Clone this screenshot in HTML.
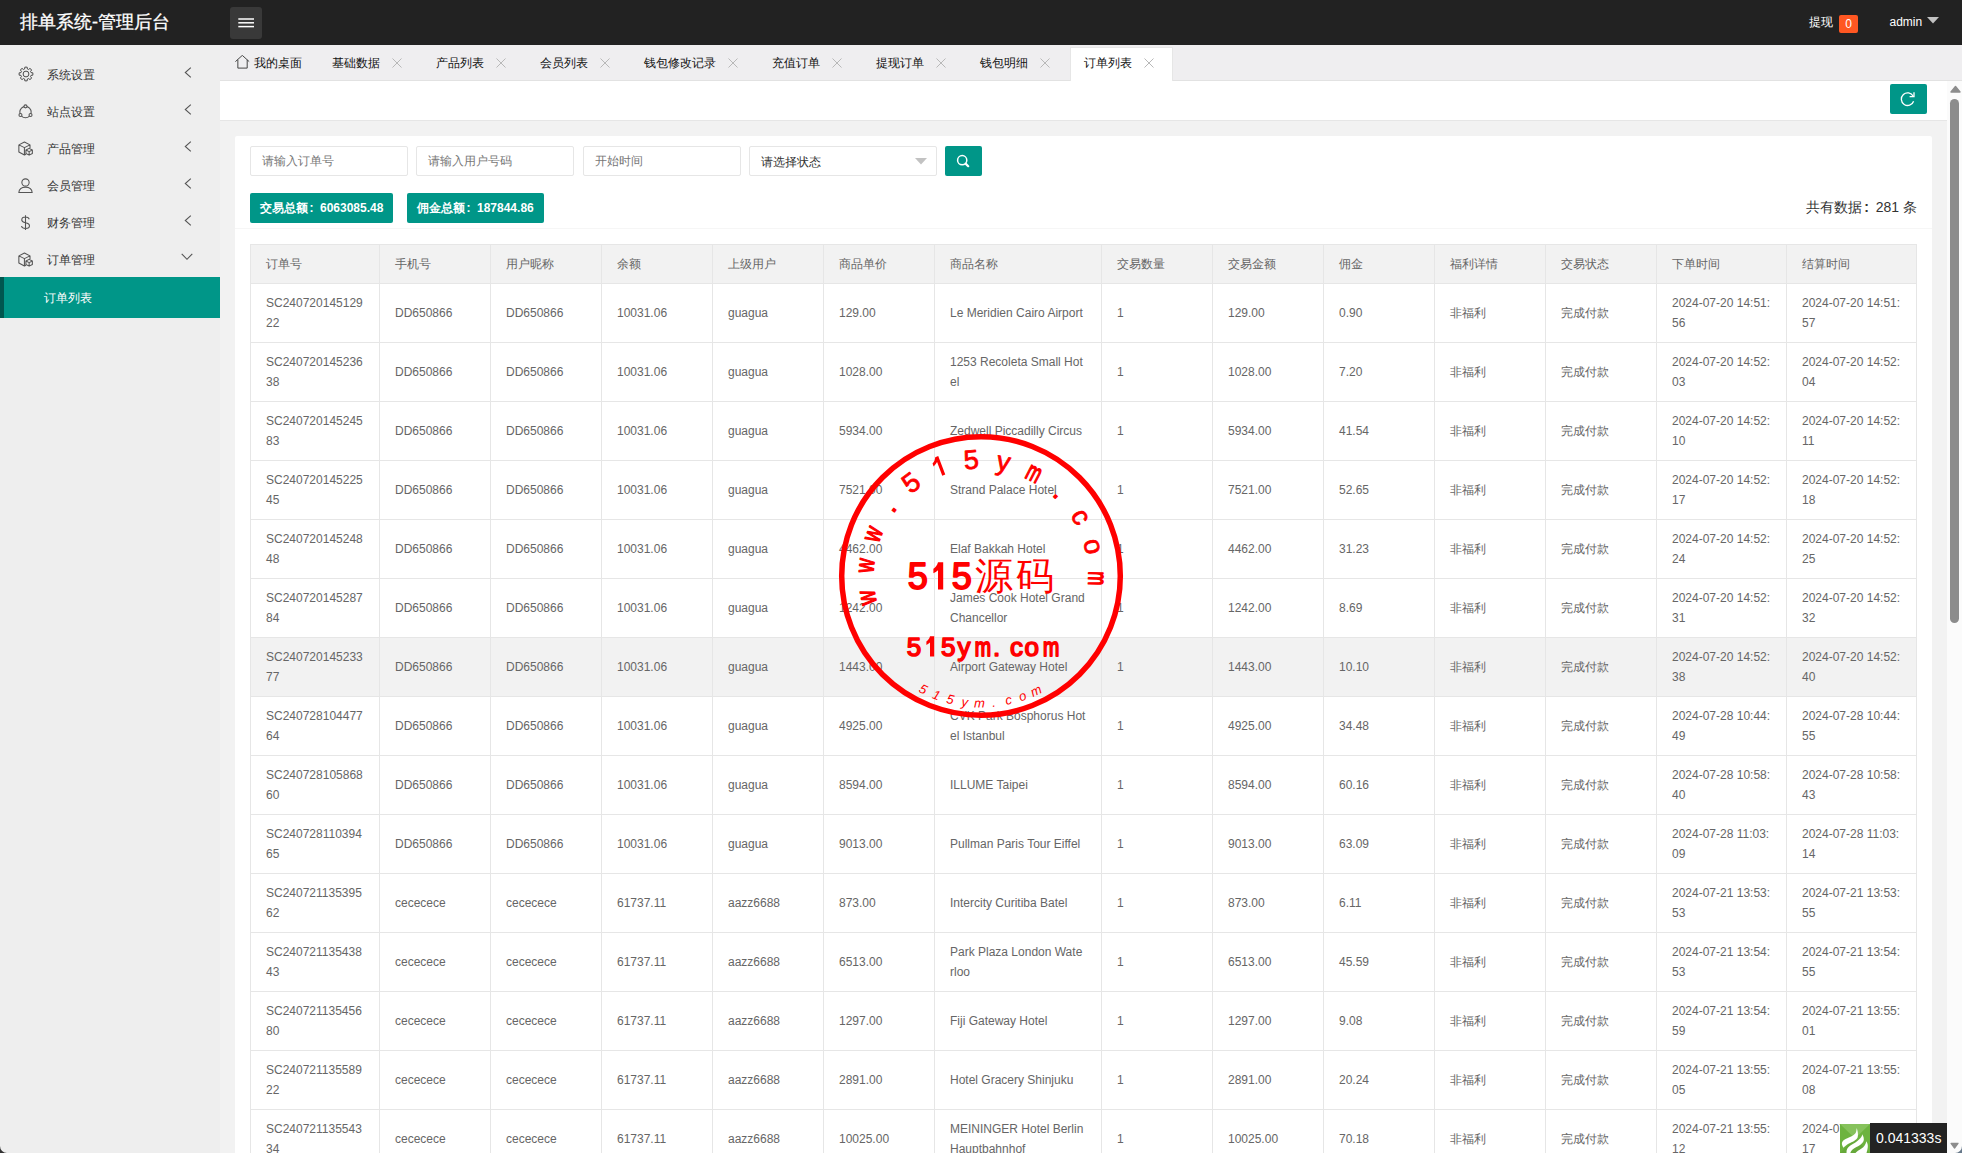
<!DOCTYPE html>
<html><head><meta charset="utf-8"><title>排单系统-管理后台</title>
<style>
*{margin:0;padding:0;box-sizing:border-box}
html,body{width:1962px;height:1153px;overflow:hidden;background:#fff;font-family:"Liberation Sans",sans-serif;font-size:12px;color:#333}
.abs{position:absolute}
#hdr{left:0;top:0;width:1962px;height:45px;background:#222}
#logo{left:20px;top:8.5px;font-size:18px;line-height:26px;color:#fff;white-space:nowrap;-webkit-text-stroke:0.3px #fff}
#burger{left:230px;top:7px;width:32px;height:32px;background:#393939;border-radius:3px}
#side{left:0;top:45px;width:220px;height:1108px;background:#eee}
.nav{position:absolute;left:0;width:220px;height:37px}
.nav .t{position:absolute;left:47px;top:10px;line-height:20px;font-size:12px;color:#333;white-space:nowrap}
.nav svg.ic{position:absolute;left:18.4px;top:12px}
.nav svg.ar{position:absolute;left:183.5px}
#act{left:0;top:277px;width:220px;height:41px;background:#009688}
#act .strip{position:absolute;left:0;top:0;width:4px;height:41px;background:#00574f}
#act .t{position:absolute;left:44px;top:11px;line-height:20px;color:#fff;font-size:12px}
#tabs{left:220px;top:45px;width:1742px;height:36px;background:#efeef0;border-bottom:1px solid #e2e2e2}
.tab{position:absolute;top:12px;line-height:20px;font-size:12px;color:#111;white-space:nowrap}
.tx{position:absolute;top:58px}
#acttab{left:1070px;top:47px;width:103px;height:34px;background:#fff;border:1px solid #e6e6e6;border-bottom:none}
#frame{left:220px;top:81px;width:1742px;height:1072px;background:#f2f2f2;overflow:hidden}
#topbar{left:0;top:0;width:1727px;height:40px;background:#fff;border-bottom:1px solid #e6e6e6}
#refresh{left:1670px;top:3px;width:37px;height:30px;background:#009688;border-radius:2px}
#sb{left:1727px;top:0;width:15px;height:1072px;background:#fbfbfb}
#card{left:15px;top:55px;width:1697px;height:1100px;background:#fff;border-radius:2px}
.inp{position:absolute;top:10px;height:30px;border:1px solid #e6e6e6;border-radius:2px;background:#fff}
.inp span{position:absolute;left:10.5px;top:4px;line-height:20px;color:#777;font-size:12px;white-space:nowrap}
.cl{display:inline-block;width:12px;text-align:left;padding-left:1.5px}
.badge{position:absolute;top:57px;height:30px;background:#009688;border-radius:2px;color:#fff;font-weight:bold;font-size:12px;line-height:30px;padding-left:10px;white-space:nowrap}
#hline{left:0;top:92px;width:1697px;height:1px;background:#f6f6f6}
#total{position:absolute;right:15px;top:61px;font-size:14px;line-height:20px;color:#333;white-space:nowrap}
table.lt{position:absolute;left:15px;top:108px;border-collapse:collapse;table-layout:fixed;width:1666px;font-size:12px;color:#666}
table.lt td,table.lt th{border:1px solid #e6e6e6;padding:9px 15px;line-height:20px;text-align:left;font-weight:normal;word-break:break-all;vertical-align:middle}
table.lt th{background:#f2f2f2;color:#666}
table.lt tr.hov td{background:#f2f2f2}
#stamp{left:831px;top:426px;width:300px;height:300px}
#trace{left:1840px;top:1124px;width:30px;height:29px;background:#6db33f}
#tracet{left:1870px;top:1123px;width:77px;height:30px;background:#232323;color:#fff;font-size:14px;line-height:30px;padding-left:6px;white-space:nowrap}
</style></head><body>
<div id="hdr" class="abs">
  <div id="logo" class="abs">排单系统-管理后台</div>
  <div id="burger" class="abs">
    <svg width="32" height="32" viewBox="0 0 32 32"><g stroke="#fff" stroke-width="1.5"><line x1="8.3" y1="12" x2="24" y2="12"/><line x1="8.3" y1="15.8" x2="24" y2="15.8"/><line x1="8.3" y1="19.6" x2="24" y2="19.6"/></g></svg>
  </div>
  <div class="abs" style="left:1809px;top:12px;line-height:20px;color:#fff;font-size:12px">提现</div>
  <div class="abs" style="left:1839px;top:15px;width:19px;height:18px;background:#ff5722;border-radius:2px;color:#fff;font-size:12px;line-height:18px;text-align:center">0</div>
  <div class="abs" style="left:1889.5px;top:11.5px;line-height:20px;color:#fff;font-size:12px">admin</div>
  <svg class="abs" style="left:1927px;top:17px" width="12" height="7" viewBox="0 0 12 7"><path d="M0 0H12L6 6.5z" fill="#c2c2c2"/></svg>
</div>
<div class="abs" style="left:0;top:45px;width:220px;height:1108px;background:#eee"></div>
<div class="nav" style="top:55px"><svg class="ic" style="left:18px;top:11px" width="16" height="16" viewBox="0 0 16 16"><path d="M6.80,1.20 A6.90,6.90 0 0 1 9.20,1.20 L9.35,2.98 A5.20,5.20 0 0 1 10.60,3.50 L11.96,2.35 A6.90,6.90 0 0 1 13.65,4.04 L12.50,5.40 A5.20,5.20 0 0 1 13.02,6.65 L14.80,6.80 A6.90,6.90 0 0 1 14.80,9.20 L13.02,9.35 A5.20,5.20 0 0 1 12.50,10.60 L13.65,11.96 A6.90,6.90 0 0 1 11.96,13.65 L10.60,12.50 A5.20,5.20 0 0 1 9.35,13.02 L9.20,14.80 A6.90,6.90 0 0 1 6.80,14.80 L6.65,13.02 A5.20,5.20 0 0 1 5.40,12.50 L4.04,13.65 A6.90,6.90 0 0 1 2.35,11.96 L3.50,10.60 A5.20,5.20 0 0 1 2.98,9.35 L1.20,9.20 A6.90,6.90 0 0 1 1.20,6.80 L2.98,6.65 A5.20,5.20 0 0 1 3.50,5.40 L2.35,4.04 A6.90,6.90 0 0 1 4.04,2.35 L5.40,3.50 A5.20,5.20 0 0 1 6.65,2.98 Z" fill="none" stroke="#444" stroke-width="0.95" stroke-linejoin="round"/><circle cx="8" cy="8" r="2.9" fill="none" stroke="#444" stroke-width="0.95"/></svg><span class="t">系统设置</span><svg class="ar" style="top:12px" width="8" height="11" viewBox="0 0 8 11"><path d="M6.8,0.6 L1.3,5.5 L6.8,10.4" fill="none" stroke="#555" stroke-width="1.1"/></svg></div>
<div class="nav" style="top:92px"><svg class="ic" width="15" height="15" viewBox="0 0 14 14"><circle cx="7" cy="7.5" r="5.3" fill="none" stroke="#555" stroke-width="1"/><circle cx="7" cy="2.2" r="1.4" fill="#eee" stroke="#555" stroke-width="1"/><circle cx="2.3" cy="10.3" r="1.4" fill="#eee" stroke="#555" stroke-width="1"/><circle cx="11.7" cy="10.3" r="1.4" fill="#eee" stroke="#555" stroke-width="1"/></svg><span class="t">站点设置</span><svg class="ar" style="top:12px" width="8" height="11" viewBox="0 0 8 11"><path d="M6.8,0.6 L1.3,5.5 L6.8,10.4" fill="none" stroke="#555" stroke-width="1.1"/></svg></div>
<div class="nav" style="top:129px"><svg class="ic" width="15" height="15" viewBox="0 0 14 14"><g fill="none" stroke="#555" stroke-width="1" stroke-linejoin="round"><path d="M0.8,3.6 L6,1 L11.2,3.6 L11.2,6.6 M0.8,3.6 L0.8,10.2 L6,13 L7.4,12.3 M0.8,3.6 L6,6.2 L11.2,3.6 M6,6.2 V13"/><path d="M7.4,8.4 L10.4,6.9 L13.4,8.4 V11.7 L10.4,13.2 L7.4,11.7Z M7.4,8.4 L10.4,9.9 L13.4,8.4 M10.4,9.9 V13.2" fill="#eee"/></g></svg><span class="t">产品管理</span><svg class="ar" style="top:12px" width="8" height="11" viewBox="0 0 8 11"><path d="M6.8,0.6 L1.3,5.5 L6.8,10.4" fill="none" stroke="#555" stroke-width="1.1"/></svg></div>
<div class="nav" style="top:166px"><svg class="ic" width="15" height="15" viewBox="0 0 14 14"><g fill="none" stroke="#555" stroke-width="1"><circle cx="7" cy="4.2" r="3.4"/><path d="M0.8,13.5 C1,9.8 3.6,8.6 7,8.6 C10.4,8.6 13,9.8 13.2,13.5 Z"/></g></svg><span class="t">会员管理</span><svg class="ar" style="top:12px" width="8" height="11" viewBox="0 0 8 11"><path d="M6.8,0.6 L1.3,5.5 L6.8,10.4" fill="none" stroke="#555" stroke-width="1.1"/></svg></div>
<div class="nav" style="top:203px"><svg class="ic" width="15" height="15" viewBox="0 0 14 14"><g fill="none" stroke="#555" stroke-width="1"><path d="M10.6,3.9 C10,2.5 8.6,1.9 7,1.9 C4.9,1.9 3.5,3 3.5,4.6 C3.5,6.3 5.3,6.8 7,7.2 C8.8,7.6 10.7,8.1 10.7,10 C10.7,11.7 9.2,12.6 7,12.6 C5.2,12.6 3.7,11.9 3.2,10.4 M7,0.3 V14"/></g></svg><span class="t">财务管理</span><svg class="ar" style="top:12px" width="8" height="11" viewBox="0 0 8 11"><path d="M6.8,0.6 L1.3,5.5 L6.8,10.4" fill="none" stroke="#555" stroke-width="1.1"/></svg></div>
<div class="nav" style="top:240px"><svg class="ic" width="15" height="15" viewBox="0 0 14 14"><g fill="none" stroke="#555" stroke-width="1" stroke-linejoin="round"><path d="M0.8,3.6 L6,1 L11.2,3.6 L11.2,6.6 M0.8,3.6 L0.8,10.2 L6,13 L7.4,12.3 M0.8,3.6 L6,6.2 L11.2,3.6 M6,6.2 V13"/><path d="M7.4,8.4 L10.4,6.9 L13.4,8.4 V11.7 L10.4,13.2 L7.4,11.7Z M7.4,8.4 L10.4,9.9 L13.4,8.4 M10.4,9.9 V13.2" fill="#eee"/></g></svg><span class="t">订单管理</span><svg class="ar" style="top:13px;left:181px" width="12" height="8" viewBox="0 0 12 8"><path d="M0.7,0.8 L6,6.3 L11.3,0.8" fill="none" stroke="#555" stroke-width="1.1"/></svg></div>
<div id="act" class="abs"><div class="strip"></div><span class="t">订单列表</span></div>
<div id="tabs" class="abs"></div>
<div id="acttab" class="abs"></div>
<svg class="abs" style="left:234.5px;top:54.5px" width="15" height="14" viewBox="0 0 15 14"><path d="M0.4,6.6 L7.3,0.4 L14.2,6.6 M2.85,4.8 V13.1 H12.2 V4.8" fill="none" stroke="#333" stroke-width="0.9"/></svg>
<div class="abs tab" style="left:254px;top:53px">我的桌面</div>
<div class="abs tab" style="left:332px;top:53px">基础数据</div><svg class="abs tx" style="left:392px" width="10" height="10" viewBox="0 0 10 10"><path d="M0.5,0.5 L9.5,9.5 M9.5,0.5 L0.5,9.5" stroke="#b4b4b4" stroke-width="0.95"/></svg>
<div class="abs tab" style="left:436px;top:53px">产品列表</div><svg class="abs tx" style="left:496px" width="10" height="10" viewBox="0 0 10 10"><path d="M0.5,0.5 L9.5,9.5 M9.5,0.5 L0.5,9.5" stroke="#b4b4b4" stroke-width="0.95"/></svg>
<div class="abs tab" style="left:540px;top:53px">会员列表</div><svg class="abs tx" style="left:600px" width="10" height="10" viewBox="0 0 10 10"><path d="M0.5,0.5 L9.5,9.5 M9.5,0.5 L0.5,9.5" stroke="#b4b4b4" stroke-width="0.95"/></svg>
<div class="abs tab" style="left:644px;top:53px">钱包修改记录</div><svg class="abs tx" style="left:728px" width="10" height="10" viewBox="0 0 10 10"><path d="M0.5,0.5 L9.5,9.5 M9.5,0.5 L0.5,9.5" stroke="#b4b4b4" stroke-width="0.95"/></svg>
<div class="abs tab" style="left:772px;top:53px">充值订单</div><svg class="abs tx" style="left:832px" width="10" height="10" viewBox="0 0 10 10"><path d="M0.5,0.5 L9.5,9.5 M9.5,0.5 L0.5,9.5" stroke="#b4b4b4" stroke-width="0.95"/></svg>
<div class="abs tab" style="left:876px;top:53px">提现订单</div><svg class="abs tx" style="left:936px" width="10" height="10" viewBox="0 0 10 10"><path d="M0.5,0.5 L9.5,9.5 M9.5,0.5 L0.5,9.5" stroke="#b4b4b4" stroke-width="0.95"/></svg>
<div class="abs tab" style="left:980px;top:53px">钱包明细</div><svg class="abs tx" style="left:1040px" width="10" height="10" viewBox="0 0 10 10"><path d="M0.5,0.5 L9.5,9.5 M9.5,0.5 L0.5,9.5" stroke="#b4b4b4" stroke-width="0.95"/></svg>
<div class="abs tab" style="left:1084px;top:53px">订单列表</div><svg class="abs tx" style="left:1144px" width="10" height="10" viewBox="0 0 10 10"><path d="M0.5,0.5 L9.5,9.5 M9.5,0.5 L0.5,9.5" stroke="#b4b4b4" stroke-width="0.95"/></svg>
<div id="frame" class="abs">
  <div id="topbar" class="abs">
    <div id="refresh" class="abs"><svg width="37" height="30" viewBox="0 0 37 30"><path d="M23.2,12.2 A6.3,6.3 0 1 0 23.6,17.2" fill="none" stroke="#fff" stroke-width="1.3"/><path d="M19.6,12.6 H24 V8.2" fill="none" stroke="#fff" stroke-width="1.3"/></svg></div>
  </div>
  <div id="sb" class="abs">
    <svg class="abs" style="left:2.5px;top:4px" width="11" height="8" viewBox="0 0 11 8"><path d="M1,7 L5.5,1.5 L10,7z" fill="#8c8c8c" stroke="#8c8c8c" stroke-linejoin="round" stroke-width="1.4"/></svg>
    <div class="abs" style="left:3px;top:18px;width:9px;height:524px;background:#8c8c8c;border-radius:5px"></div>
    <svg class="abs" style="left:2.5px;top:1061px" width="10" height="8" viewBox="0 0 11 8"><path d="M1.2,1 L5,6.3 L8.8,1z" fill="#8c8c8c" stroke="#8c8c8c" stroke-linejoin="round" stroke-width="1.4"/></svg>
  </div>
  <div id="card" class="abs">
    <div class="inp" style="left:15px;width:158px"><span>请输入订单号</span></div>
    <div class="inp" style="left:181px;width:158px"><span>请输入用户号码</span></div>
    <div class="inp" style="left:348px;width:158px"><span>开始时间</span></div>
    <div class="inp" style="left:514px;width:188px"><span style="color:#333;top:5px">请选择状态</span>
      <svg class="abs" style="left:165px;top:11px" width="12" height="7" viewBox="0 0 12 7"><path d="M0,0H12L6,6.5z" fill="#c2c2c2"/></svg></div>
    <div class="abs" style="left:710px;top:10px;width:37px;height:30px;background:#009688;border-radius:2px">
      <svg width="37" height="30" viewBox="0 0 37 30"><circle cx="17.2" cy="14.2" r="4.6" fill="none" stroke="#fff" stroke-width="1.5"/><path d="M20.6,17.6 L23.2,20.2" stroke="#fff" stroke-width="2.2" stroke-linecap="round"/></svg>
    </div>
    <div class="badge" style="left:15px;width:143px">交易总额<span class="cl">:</span>6063085.48</div>
    <div class="badge" style="left:172px;width:137px">佣金总额<span class="cl">:</span>187844.86</div>
    <div id="total">共有数据<span class="cl" style="width:14px;padding-left:2.5px;font-weight:bold">:</span>281 条</div>
    <div id="hline" class="abs"></div>
    <table class="lt">
      <colgroup><col style="width:129px"><col style="width:111px"><col style="width:111px"><col style="width:111px"><col style="width:111px"><col style="width:111px"><col style="width:167px"><col style="width:111px"><col style="width:111px"><col style="width:111px"><col style="width:111px"><col style="width:111px"><col style="width:130px"><col style="width:130px"></colgroup>
      <thead><tr><th>订单号</th><th>手机号</th><th>用户昵称</th><th>余额</th><th>上级用户</th><th>商品单价</th><th>商品名称</th><th>交易数量</th><th>交易金额</th><th>佣金</th><th>福利详情</th><th>交易状态</th><th>下单时间</th><th>结算时间</th></tr></thead>
      <tbody>
<tr><td>SC24072014512922</td><td>DD650866</td><td>DD650866</td><td>10031.06</td><td>guagua</td><td>129.00</td><td>Le Meridien Cairo Airport</td><td>1</td><td>129.00</td><td>0.90</td><td>非福利</td><td>完成付款</td><td>2024-07-20 14:51:56</td><td>2024-07-20 14:51:57</td></tr>
<tr><td>SC24072014523638</td><td>DD650866</td><td>DD650866</td><td>10031.06</td><td>guagua</td><td>1028.00</td><td>1253 Recoleta Small Hotel</td><td>1</td><td>1028.00</td><td>7.20</td><td>非福利</td><td>完成付款</td><td>2024-07-20 14:52:03</td><td>2024-07-20 14:52:04</td></tr>
<tr><td>SC24072014524583</td><td>DD650866</td><td>DD650866</td><td>10031.06</td><td>guagua</td><td>5934.00</td><td>Zedwell Piccadilly Circus</td><td>1</td><td>5934.00</td><td>41.54</td><td>非福利</td><td>完成付款</td><td>2024-07-20 14:52:10</td><td>2024-07-20 14:52:11</td></tr>
<tr><td>SC24072014522545</td><td>DD650866</td><td>DD650866</td><td>10031.06</td><td>guagua</td><td>7521.00</td><td>Strand Palace Hotel</td><td>1</td><td>7521.00</td><td>52.65</td><td>非福利</td><td>完成付款</td><td>2024-07-20 14:52:17</td><td>2024-07-20 14:52:18</td></tr>
<tr><td>SC24072014524848</td><td>DD650866</td><td>DD650866</td><td>10031.06</td><td>guagua</td><td>4462.00</td><td>Elaf Bakkah Hotel</td><td>1</td><td>4462.00</td><td>31.23</td><td>非福利</td><td>完成付款</td><td>2024-07-20 14:52:24</td><td>2024-07-20 14:52:25</td></tr>
<tr><td>SC24072014528784</td><td>DD650866</td><td>DD650866</td><td>10031.06</td><td>guagua</td><td>1242.00</td><td>James Cook Hotel Grand Chancellor</td><td>1</td><td>1242.00</td><td>8.69</td><td>非福利</td><td>完成付款</td><td>2024-07-20 14:52:31</td><td>2024-07-20 14:52:32</td></tr>
<tr class="hov"><td>SC24072014523377</td><td>DD650866</td><td>DD650866</td><td>10031.06</td><td>guagua</td><td>1443.00</td><td>Airport Gateway Hotel</td><td>1</td><td>1443.00</td><td>10.10</td><td>非福利</td><td>完成付款</td><td>2024-07-20 14:52:38</td><td>2024-07-20 14:52:40</td></tr>
<tr><td>SC24072810447764</td><td>DD650866</td><td>DD650866</td><td>10031.06</td><td>guagua</td><td>4925.00</td><td>CVK Park Bosphorus Hotel Istanbul</td><td>1</td><td>4925.00</td><td>34.48</td><td>非福利</td><td>完成付款</td><td>2024-07-28 10:44:49</td><td>2024-07-28 10:44:55</td></tr>
<tr><td>SC24072810586860</td><td>DD650866</td><td>DD650866</td><td>10031.06</td><td>guagua</td><td>8594.00</td><td>ILLUME Taipei</td><td>1</td><td>8594.00</td><td>60.16</td><td>非福利</td><td>完成付款</td><td>2024-07-28 10:58:40</td><td>2024-07-28 10:58:43</td></tr>
<tr><td>SC24072811039465</td><td>DD650866</td><td>DD650866</td><td>10031.06</td><td>guagua</td><td>9013.00</td><td>Pullman Paris Tour Eiffel</td><td>1</td><td>9013.00</td><td>63.09</td><td>非福利</td><td>完成付款</td><td>2024-07-28 11:03:09</td><td>2024-07-28 11:03:14</td></tr>
<tr><td>SC24072113539562</td><td>cececece</td><td>cececece</td><td>61737.11</td><td>aazz6688</td><td>873.00</td><td>Intercity Curitiba Batel</td><td>1</td><td>873.00</td><td>6.11</td><td>非福利</td><td>完成付款</td><td>2024-07-21 13:53:53</td><td>2024-07-21 13:53:55</td></tr>
<tr><td>SC24072113543843</td><td>cececece</td><td>cececece</td><td>61737.11</td><td>aazz6688</td><td>6513.00</td><td>Park Plaza London Waterloo</td><td>1</td><td>6513.00</td><td>45.59</td><td>非福利</td><td>完成付款</td><td>2024-07-21 13:54:53</td><td>2024-07-21 13:54:55</td></tr>
<tr><td>SC24072113545680</td><td>cececece</td><td>cececece</td><td>61737.11</td><td>aazz6688</td><td>1297.00</td><td>Fiji Gateway Hotel</td><td>1</td><td>1297.00</td><td>9.08</td><td>非福利</td><td>完成付款</td><td>2024-07-21 13:54:59</td><td>2024-07-21 13:55:01</td></tr>
<tr><td>SC24072113558922</td><td>cececece</td><td>cececece</td><td>61737.11</td><td>aazz6688</td><td>2891.00</td><td>Hotel Gracery Shinjuku</td><td>1</td><td>2891.00</td><td>20.24</td><td>非福利</td><td>完成付款</td><td>2024-07-21 13:55:05</td><td>2024-07-21 13:55:08</td></tr>
<tr><td>SC24072113554334</td><td>cececece</td><td>cececece</td><td>61737.11</td><td>aazz6688</td><td>10025.00</td><td>MEININGER Hotel Berlin Hauptbahnhof</td><td>1</td><td>10025.00</td><td>70.18</td><td>非福利</td><td>完成付款</td><td>2024-07-21 13:55:12</td><td>2024-07-21 13:55:17</td></tr>
      </tbody>
    </table>
  </div>
</div>
<svg id="stamp" class="abs" width="300" height="300" viewBox="0 0 300 300" font-family="Liberation Sans" fill="#f00" stroke-linejoin="round">
<circle cx="150" cy="150" r="139.3" fill="none" stroke="#f00" stroke-width="5.5"/>
<text transform="translate(44.40 170.14) rotate(259.20) scale(0.72 1)" text-anchor="middle" font-size="27" stroke="#f00" stroke-width="1.4">w</text>
<text transform="translate(42.94 140.26) rotate(275.20) scale(0.72 1)" text-anchor="middle" font-size="27" stroke="#f00" stroke-width="1.4">w</text>
<text transform="translate(49.78 111.13) rotate(291.20) scale(0.72 1)" text-anchor="middle" font-size="27" stroke="#f00" stroke-width="1.4">w</text>
<text transform="translate(64.37 85.01) rotate(307.20) scale(1.00 1)" text-anchor="middle" font-size="27" stroke="#f00" stroke-width="1.2">.</text>
<text transform="translate(85.60 63.92) rotate(323.20) scale(1.00 1)" text-anchor="middle" font-size="27" stroke="#f00" stroke-width="0.8">5</text>
<path transform="translate(111.83 49.51) rotate(339.20)" d="M-0.6,-19.8 H2.6 V0 H-0.6 V-14.6 C-2,-13.4 -3.6,-12.5 -5.4,-11.8 V-14.8 C-3.4,-15.9 -1.6,-17.6 -0.6,-19.8 Z"/>
<text transform="translate(141.00 42.88) rotate(355.20) scale(1.00 1)" text-anchor="middle" font-size="27" stroke="#f00" stroke-width="0.8">5</text>
<text transform="translate(170.88 44.55) rotate(371.20) scale(1.00 1)" text-anchor="middle" font-size="27" stroke="#f00" stroke-width="0.8">y</text>
<text transform="translate(199.14 54.39) rotate(387.20) scale(0.62 1)" text-anchor="middle" font-size="27" stroke="#f00" stroke-width="1.6">m</text>
<text transform="translate(223.59 71.64) rotate(403.20) scale(1.00 1)" text-anchor="middle" font-size="27" stroke="#f00" stroke-width="1.2">.</text>
<text transform="translate(242.34 94.96) rotate(419.20) scale(1.00 1)" text-anchor="middle" font-size="27" stroke="#f00" stroke-width="0.8">c</text>
<text transform="translate(253.93 122.54) rotate(435.20) scale(1.00 1)" text-anchor="middle" font-size="27" stroke="#f00" stroke-width="0.8">o</text>
<text transform="translate(257.48 152.25) rotate(451.20) scale(0.62 1)" text-anchor="middle" font-size="27" stroke="#f00" stroke-width="1.6">m</text>
<text transform="translate(92.15 263.06) rotate(27.10)" text-anchor="middle" dominant-baseline="central" font-size="13" font-style="italic">5</text>
<text transform="translate(105.50 268.95) rotate(20.51)" text-anchor="middle" dominant-baseline="central" font-size="13" font-style="italic">1</text>
<text transform="translate(119.45 273.27) rotate(13.92)" text-anchor="middle" dominant-baseline="central" font-size="13" font-style="italic">5</text>
<text transform="translate(133.80 275.96) rotate(7.33)" text-anchor="middle" dominant-baseline="central" font-size="13" font-style="italic">y</text>
<text transform="translate(148.36 276.99) rotate(0.74)" text-anchor="middle" dominant-baseline="central" font-size="13" font-style="italic">m</text>
<text transform="translate(162.94 276.34) rotate(-5.85)" text-anchor="middle" dominant-baseline="central" font-size="13" font-style="italic">.</text>
<text transform="translate(177.36 274.02) rotate(-12.44)" text-anchor="middle" dominant-baseline="central" font-size="13" font-style="italic">c</text>
<text transform="translate(191.41 270.06) rotate(-19.03)" text-anchor="middle" dominant-baseline="central" font-size="13" font-style="italic">o</text>
<text transform="translate(204.91 264.51) rotate(-25.62)" text-anchor="middle" dominant-baseline="central" font-size="13" font-style="italic">m</text>
<text x="86.8" y="162.7" text-anchor="middle" font-size="36" stroke="#f00" stroke-width="1.8">5</text>
<text x="130.8" y="162.7" text-anchor="middle" font-size="36" stroke="#f00" stroke-width="1.8">5</text>
<path d="M107.0,136.2 H112.2 V163.6 H107.0 V144.3 C105.6,145.6 104.0,146.5 102.4,147.2 V142.8 C104.3,141.8 106.2,139.2 107.0,136.2 Z"/>
<text x="163.2" y="163.0" text-anchor="middle" font-size="38">源</text>
<text x="204.0" y="163.0" text-anchor="middle" font-size="38">码</text>
<text transform="translate(83.1 229.8) scale(1.00 1)" text-anchor="middle" font-size="26" stroke="#f00" stroke-width="1.6">5</text>
<text transform="translate(117.3 229.8) scale(1.00 1)" text-anchor="middle" font-size="26" stroke="#f00" stroke-width="1.6">5</text>
<text transform="translate(133.0 229.8) scale(1.00 1)" text-anchor="middle" font-size="26" stroke="#f00" stroke-width="1.6">y</text>
<text transform="translate(151.8 229.8) scale(0.75 1)" text-anchor="middle" font-size="26" stroke="#f00" stroke-width="2.0">m</text>
<text transform="translate(165.5 229.8) scale(1.00 1)" text-anchor="middle" font-size="26" stroke="#f00" stroke-width="1.6">.</text>
<text transform="translate(185.5 229.8) scale(1.00 1)" text-anchor="middle" font-size="26" stroke="#f00" stroke-width="1.6">c</text>
<text transform="translate(200.7 229.8) scale(1.00 1)" text-anchor="middle" font-size="26" stroke="#f00" stroke-width="1.6">o</text>
<text transform="translate(220.2 229.8) scale(0.75 1)" text-anchor="middle" font-size="26" stroke="#f00" stroke-width="2.0">m</text>
<path d="M99.0,210.3 H103.2 V230.6 H99.0 V216.6 C98.0,217.6 96.8,218.4 95.4,219.0 V215.4 C97.0,214.5 98.4,212.6 99.0,210.3 Z"/>
</svg>
<div id="trace" class="abs"><svg width="30" height="29" viewBox="0 0 30 29"><path d="M0,0 H30 L15,14.5z" fill="#86c25c"/><path d="M0,29 H30 L15,14.5z" fill="#66a83a"/><path d="M16.6,4 C17.5,6 18.5,10 17.7,13.2 C16.8,16 12,18 8.9,19.5 C6.5,20.7 4.6,22.9 3.4,23.7 C2,21.5 1.5,19.5 2.2,18 C3.5,15.5 7.4,14.3 10,13 C13,11.8 15.5,10 16,8.3 C16.5,6.5 16.6,5 16.6,4 Z M22.3,10.3 C23.5,12.5 24.2,15 23.7,16.5 C22.8,20 18.5,22 16,23.2 C13,24.8 11,26.5 10.3,29 L6.5,29 C6.3,26 7.5,23.5 10,21.8 C13,19.8 17,18 20.3,14.3 C21.5,13 22.2,11.5 22.3,10.3 Z M26.3,17.2 C27.5,19 28,21 27.8,23 C27.5,25.5 26.9,27.5 26.5,29 L15.5,29 C16.5,27.5 19,26 21.5,24.5 C24,23 25.8,20.5 26.3,17.2 Z" fill="#fff"/></svg></div>
<div id="tracet" class="abs">0.041333s</div>
<svg class="abs" style="left:1955px;top:1146px" width="7" height="7" viewBox="0 0 7 7"><path d="M7,0 V7 H0 A7,7 0 0 0 7,0 Z" fill="#66788a"/></svg>
<svg class="abs" style="left:0;top:1146px" width="7" height="7" viewBox="0 0 7 7"><path d="M0,0 V7 H7 A7,7 0 0 1 0,0 Z" fill="#333"/></svg>
</body></html>
